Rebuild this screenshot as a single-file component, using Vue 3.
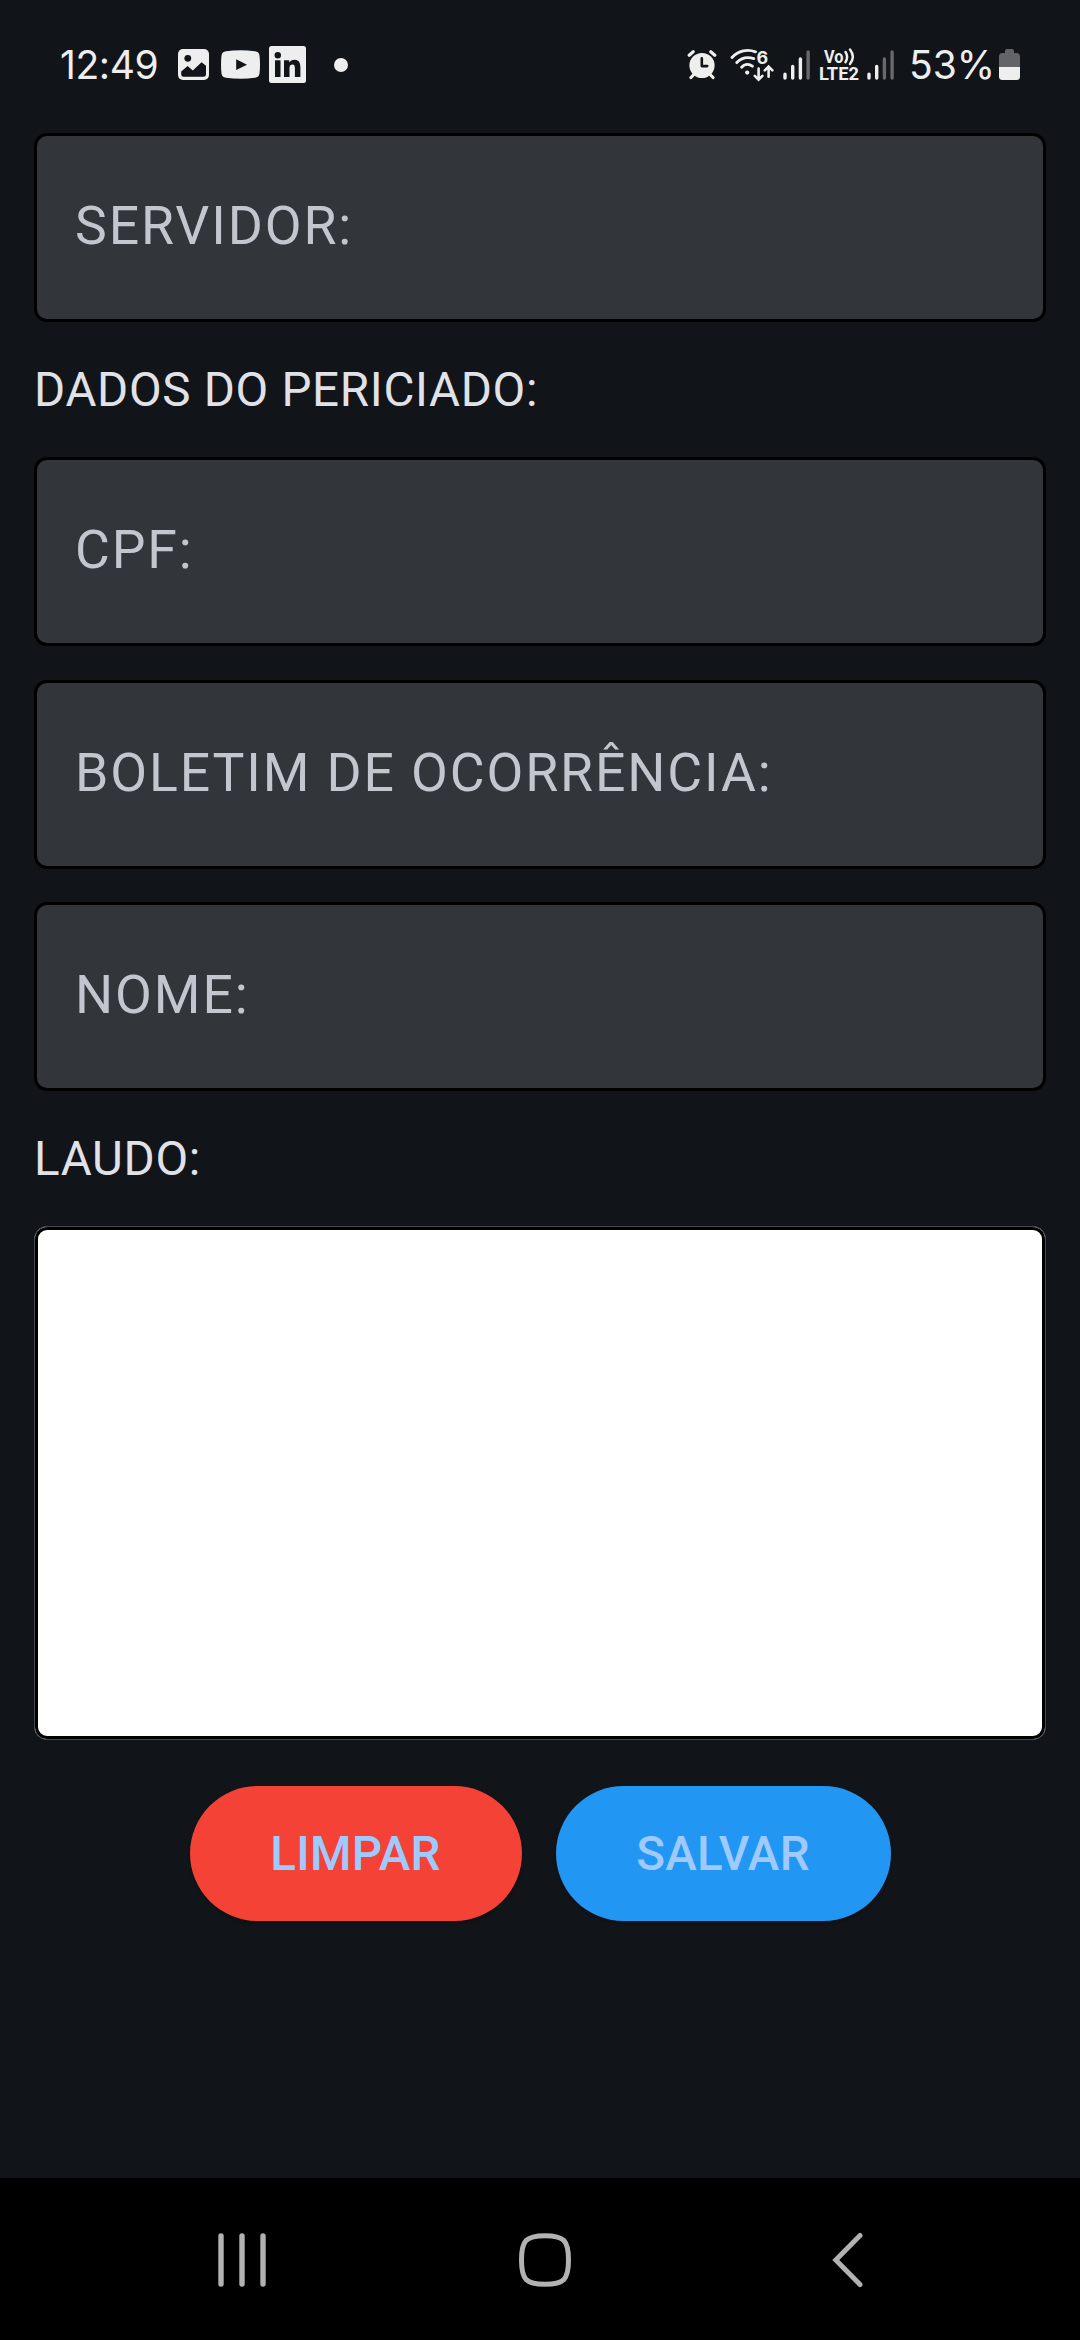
<script setup>
const identification = [
  { id: 'cpf', label: 'CPF:' },
  { id: 'boletim', label: 'BOLETIM DE OCORRÊNCIA:' },
  { id: 'nome', label: 'NOME:' }
]
</script>

<template>
  <div class="screen">
    <header class="status">
      <div class="status-left">
        <span class="clock">12:49</span>
        <svg class="ic-image" width="31" height="31" viewBox="0 0 31 31">
          <rect width="31" height="31" rx="5" fill="#eee" />
          <circle cx="9.8" cy="9.3" r="3.4" fill="#111418" />
          <path d="M3.2 22.4 9.6 17l5.2 4.4 8.8-8.2 4.4 3.6v8.6a2.4 2.4 0 0 1-2.4 2.4H5.6a2.4 2.4 0 0 1-2.4-2.4z" fill="#111418" />
        </svg>
        <svg class="ic-video" width="39" height="29" viewBox="0 0 39 29">
          <path d="M5 1.2Q19.500-.7 34 1.200Q38 1.700 38.500 5.500Q39.500 14.500 38.500 23.500Q38 27.300 34 27.800Q19.500 29.700 5 27.800Q1 27.300.5 23.500Q-.5 14.500.5 5.500Q1 1.700 5 1.200Z" fill="#eee" />
          <path d="M15.200 9.300v10.800L26 14.700z" fill="#111418" />
        </svg>
        <svg class="ic-in" width="37" height="37" viewBox="0 0 37 37">
          <rect width="37" height="37" rx="2.500" fill="#eee" />
          <g fill="#111418">
            <circle cx="8.800" cy="9.200" r="3.200" />
            <rect x="6" y="14.300" width="5.500" height="16.700" />
            <path d="M15 14.300h5.200v2.300c1-1.700 2.900-2.800 5.300-2.800 4.400 0 5.900 3 5.900 7.500V31h-5.500v-8.600c0-2.300-.5-3.900-2.500-3.900-2.100 0-2.900 1.600-2.900 3.900V31H15z" />
          </g>
        </svg>
        <i class="dot"></i>
      </div>
      <div class="status-right">
        <svg class="ic-alarm" width="30" height="31" viewBox="0 0 30 31">
          <g stroke="#eee" stroke-width="3.200" stroke-linecap="round">
            <path d="M2.200 6.200 6.200 2.800M27.800 6.200l-4-3.400M6.800 25.500 4 28.500M23.200 25.500l2.800 3" />
          </g>
          <circle cx="15" cy="16.500" r="12.600" fill="#eee" />
          <path d="M14.800 9.300v7.800h5.400" fill="none" stroke="#111418" stroke-width="2.600" stroke-linecap="round" stroke-linejoin="round" />
        </svg>
        <svg class="ic-wifi" width="44" height="38" viewBox="0 -2 44 38">
          <g fill="none" stroke="#eee" stroke-width="2.900" stroke-linecap="round">
            <path d="M2 9.400C8.500 2.600 17.500.8 25.500 3.800" />
            <path d="M6.800 14.600C11.200 9.900 17.300 8.600 23.800 10.600" />
            <path d="M11.600 19.200c2.900-3.100 7.200-3.700 10.800-1" />
            <path d="M28.600 20.500v11M24.800 27.800l3.800 3.800 3.800-3.800M38.600 28.800V19M34.800 22.300l3.800-3.800 3.800 3.800" stroke-width="2.600" />
          </g>
          <circle cx="17.200" cy="24.600" r="2.100" fill="#eee" />
          <text x="26.400" y="15.600" class="six">6</text>
        </svg>
        <svg class="ic-signal" width="28" height="30" viewBox="0 0 28 30">
          <g stroke="#eee" stroke-width="3.400" stroke-linecap="round">
            <path d="M2 24.200V28M9.700 16.500V28M17.400 9V28" /><path d="M25.100 2V28" stroke="#67696c" />
          </g>
        </svg>
        <svg class="ic-lte" width="43" height="44" viewBox="-1 -5 43 44">
          <text x="5" y="14.600" class="lte" textLength="19.500" lengthAdjust="spacingAndGlyphs">Vo</text>
          <text x="0" y="32" class="lte" textLength="40" lengthAdjust="spacingAndGlyphs">LTE2</text>
          <path d="M26.500 4q3.200 5 0 10.200M31 1.500q5.600 7.200 0 14.400" fill="none" stroke="#eee" stroke-width="2.500" stroke-linecap="round" />
        </svg>
        <svg class="ic-signal" width="28" height="30" viewBox="0 0 28 30">
          <g stroke="#eee" stroke-width="3.400" stroke-linecap="round">
            <path d="M2 24.200V28M9.700 16.500V28" /><path d="M17.400 9V28M25.100 2V28" stroke="#67696c" />
          </g>
        </svg>
        <span class="percent">53%</span>
        <svg class="ic-battery" width="21" height="31" viewBox="0 0 21 31">
          <path d="M6 4V2q0-2 2-2h5q2 0 2 2v2h2.500Q21 4 21 7.500V18H0V7.500Q0 4 3.500 4z" fill="#626468" />
          <path d="M0 18h21v9.500q0 3.500-3.500 3.500h-14Q0 31 0 27.500z" fill="#eee" />
        </svg>
      </div>
    </header>

    <main class="form">
      <div class="field"><span>SERVIDOR:</span></div>
      <h2 class="heading">DADOS DO PERICIADO:</h2>
      <div class="group">
        <div v-for="item in identification" :key="item.id" class="field"><span>{{ item.label }}</span></div>
      </div>
      <h2 class="heading">LAUDO:</h2>
      <div class="report"></div>
      <div class="actions">
        <button class="btn clear">LIMPAR</button>
        <button class="btn save">SALVAR</button>
      </div>
    </main>

    <nav class="navbar">
      <svg width="48" height="56" viewBox="0 0 48 56"><path d="M3 4v48M24 4v48M45 4v48" stroke="#b2b2b2" stroke-width="5.400" stroke-linecap="round" /></svg>
      <svg class="ic-home" width="54" height="56" viewBox="0 0 54 56"><path d="M27 3.700C46 3.700 50.500 8.500 50.500 28S46 52.300 27 52.300 3.500 47.500 3.500 28 8 3.700 27 3.700Z" fill="none" stroke="#b2b2b2" stroke-width="5" /></svg>
      <svg width="32" height="56" viewBox="0 0 32 56"><path d="M28 3.500 3.800 28 28 52.500" fill="none" stroke="#b2b2b2" stroke-width="5" stroke-linecap="round" /></svg>
    </nav>
  </div>
</template>

<style>
body { margin: 0; background: #111418; }
</style>

<style scoped>
.screen {
  width: 1080px;
  height: 2340px;
  display: flex;
  flex-direction: column;
  overflow: hidden;
  background: #111418;
  font-family: Roboto, "Liberation Sans", sans-serif;
}
.screen * { box-sizing: border-box; }
svg { display: block; flex: none; }

.status {
  height: 133px;
  padding: 0 60px 4px 60px;
  display: flex;
  justify-content: space-between;
  color: #eee;
}
.status-left, .status-right { display: flex; align-items: center; }
.clock, .percent {
  font-family: Inter, Roboto, sans-serif;
  font-size: 39px;
  line-height: 48px;
  white-space: nowrap;
}
.clock { width: 118px; letter-spacing: -.4px; }
.ic-video { margin-left: 12px; }
.ic-in { margin-left: 9px; }
.dot { width: 14px; height: 14px; margin-left: 28px; border-radius: 50%; background: #eee; }
.ic-wifi { margin-left: 13px; }
.ic-signal { margin-left: 9px; }
.ic-lte { margin-left: 7px; }
.ic-lte + .ic-signal { margin-left: 6px; }
.percent { margin-left: 14px; width: 90px; letter-spacing: 0; }
.six { font: 700 18px Inter, sans-serif; fill: #eee; }
.lte { font: 700 18.500px Roboto, sans-serif; fill: #eee; }

.form { flex: 1; padding: 0 34px; }
.field {
  height: 189px;
  padding: 0 0 4px 38px;
  display: flex;
  align-items: center;
  border: 3px solid #000;
  border-radius: 13px;
  background: #323539;
  color: #c3c6cf;
  font-size: 53.500px;
  letter-spacing: 1.900px;
  white-space: nowrap;
}
.heading {
  height: 135px;
  margin: 0;
  font-size: 47.500px;
  font-weight: 400;
  line-height: 137px;
  letter-spacing: .7px;
  color: #e1e2e8;
}
.group { display: flex; flex-direction: column; gap: 33.500px; }
.report {
  height: 514px;
  border: 1px solid #43474e;
  border-radius: 13px;
  background: #fff;
  box-shadow: inset 0 0 0 3px #000;
}
.actions { display: flex; justify-content: center; gap: 34px; margin-top: 46px; }
.btn {
  height: 135px;
  padding: 1px 0 0;
  border: 0;
  border-radius: 68px;
  color: #9fcaff;
  font: 500 47.500px Roboto, sans-serif;
  letter-spacing: .3px;
  box-shadow: 0 2px 3px rgba(0, 0, 0, .2);
}
.clear { width: 332px; background: #f44336; }
.save { width: 335px; background: #2196f3; }

.navbar {
  height: 162px;
  padding: 2px 216px 0 218px;
  display: flex;
  align-items: center;
  justify-content: space-between;
  background: #000;
}
.ic-home { margin-right: 9px; }
</style>
